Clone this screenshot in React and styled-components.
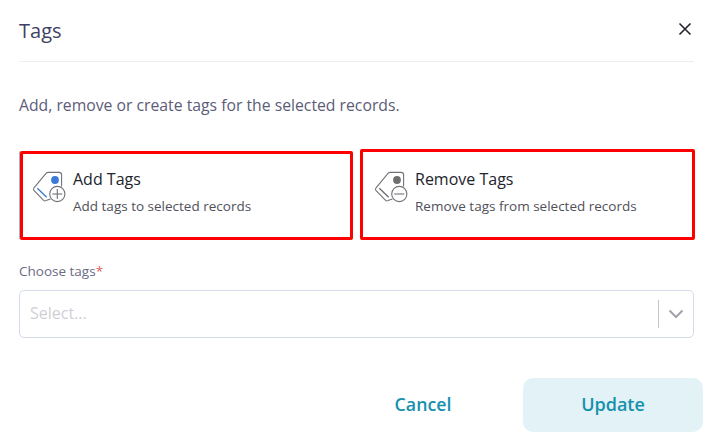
import React from "react";
import styled, { createGlobalStyle } from "styled-components";

const GlobalStyle = createGlobalStyle`
  html, body {
    margin: 0;
    padding: 0;
    background: #ffffff;
    font-family: "Open Sans", "Liberation Sans", sans-serif;
  }
`;

const TagIcon = ({ accent, variant }) => (
  <TagSvg width="34" height="34" viewBox="0 0 34 34" fill="none">
    <path
      d="M1.8 18.2 L14 3.4 Q15 2.4 16.4 2.4 H27 Q29.6 2.4 29.6 5 V16.5"
      stroke="#6f7278"
      strokeWidth="1.1"
    />
    <path
      d="M1.8 18.2 Q1 19.4 1.9 20.4 L11.6 30.4 Q12.8 31.4 14 30.6 L18.5 29"
      stroke="#6f7278"
      strokeWidth="1.1"
    />
    <circle cx="23" cy="10" r="3.9" fill={accent} />
    <path d="M5.3 18.3 L14.7 27.3" stroke={accent} strokeWidth="1.4" />
    <circle cx="25.3" cy="24" r="7.6" fill="#fff" stroke="#6f7278" strokeWidth="1.1" />
    {variant === "add" && <path d="M25.3 19 V29" stroke="#6f7278" strokeWidth="1.1" />}
    <path d="M20.3 24 H30.3" stroke="#6f7278" strokeWidth="1.1" />
  </TagSvg>
);

const options = [
  {
    key: "add",
    title: "Add Tags",
    desc: "Add tags to selected records",
    accent: "#3b7bd6",
  },
  {
    key: "remove",
    title: "Remove Tags",
    desc: "Remove tags from selected records",
    accent: "#6e6e6e",
  },
];

const App = () => {
  return (
    <Modal>
      <GlobalStyle />
      <Header>
        <Title>Tags</Title>
        <CloseIcon width="14" height="14" viewBox="0 0 14 14">
          <path d="M1.5 1.5 L12.5 12.5 M12.5 1.5 L1.5 12.5" stroke="#22242c" strokeWidth="1.6" />
        </CloseIcon>
      </Header>
      <Description>Add, remove or create tags for the selected records.</Description>
      <Cards>
        {options.map((o) => (
          <Card key={o.key} $variant={o.key}>
            <TagIcon accent={o.accent} variant={o.key} />
            <CardText>
              <CardTitle>{o.title}</CardTitle>
              <CardDesc>{o.desc}</CardDesc>
            </CardText>
          </Card>
        ))}
      </Cards>
      <Label>
        Choose tags<Required>*</Required>
      </Label>
      <SelectBox>
        <Placeholder>Select...</Placeholder>
        <Separator />
        <Chevron width="16" height="10" viewBox="0 0 16 10" fill="none">
          <path d="M1.5 1.5 L8 8 L14.5 1.5" stroke="#a3a3ad" strokeWidth="2" />
        </Chevron>
      </SelectBox>
      <Footer>
        <CancelButton>Cancel</CancelButton>
        <UpdateButton>Update</UpdateButton>
      </Footer>
    </Modal>
  );
};

const Modal = styled.div`
  width: 713px;
  height: 443px;
  box-sizing: border-box;
  padding: 0 10px 0 19px;
  overflow: hidden;
  background: #fff;
`;

const Header = styled.div`
  width: 675px;
  height: 62px;
  box-sizing: border-box;
  display: flex;
  justify-content: space-between;
  align-items: center;
  padding: 0 1px 1px 0;
  border-bottom: 1px solid #eeeef0;
`;

const Title = styled.div`
  font-size: 20px;
  font-weight: 500;
  color: #3f3f66;
`;

const CloseIcon = styled.svg`
  display: block;
  margin-top: -3px;
  margin-right: 1px;
`;

const Description = styled.div`
  margin-top: 32px;
  height: 22px;
  line-height: 22px;
  font-size: 15.75px;
  color: #5c5c78;
`;

const Cards = styled.div`
  display: flex;
  align-items: flex-end;
  gap: 7px;
  margin-top: 33px;
  margin-left: 1px;
  width: 675px;
`;

const Card = styled.div`
  box-sizing: border-box;
  width: ${(p) => (p.$variant === "add" ? "333px" : "335px")};
  height: ${(p) => (p.$variant === "add" ? "89px" : "91px")};
  display: flex;
  gap: 7px;
  padding: ${(p) => (p.$variant === "add" ? "15px 0 0 9px" : "17px 0 0 11px")};
  border: 3px solid #ff0000;
  border-radius: 2px;
  box-shadow: ${(p) => (p.$variant === "add" ? "-1px 0 0 #9fb4c2" : "none")};
`;

const TagSvg = styled.svg`
  display: block;
  flex: none;
  margin-top: 1px;
`;

const CardText = styled.div`
  display: flex;
  flex-direction: column;
  gap: 7px;
`;

const CardTitle = styled.div`
  font-size: 16px;
  line-height: 20px;
  font-weight: 500;
  color: #22242c;
`;

const CardDesc = styled.div`
  font-size: 13.5px;
  line-height: 20px;
  color: #50505a;
`;

const Label = styled.div`
  margin-top: 21px;
  height: 20px;
  line-height: 20px;
  font-size: 13.5px;
  color: #6b6b85;
`;

const Required = styled.span`
  color: #e0605a;
`;

const SelectBox = styled.div`
  box-sizing: border-box;
  width: 675px;
  height: 48px;
  margin-top: 9px;
  display: flex;
  align-items: center;
  border: 1px solid #d5dbe8;
  border-radius: 5px;
  padding: 0 9px 0 10px;
`;

const Placeholder = styled.div`
  flex: 1;
  margin-top: -2px;
  font-size: 16px;
  color: #cfcfd6;
`;

const Separator = styled.div`
  width: 1px;
  height: 28px;
  background: #c4c4cc;
`;

const Chevron = styled.svg`
  display: block;
  margin-left: 9px;
`;

const Footer = styled.div`
  margin-top: 40px;
  display: flex;
  justify-content: flex-end;
  align-items: center;
  gap: 50px;
`;

const CancelButton = styled.div`
  width: 100px;
  margin-top: -2px;
  text-align: center;
  font-size: 17.75px;
  font-weight: 600;
  color: #1591ad;
`;

const UpdateButton = styled.div`
  width: 180px;
  height: 54px;
  line-height: 52px;
  text-align: center;
  border-radius: 10px;
  background: #e3f2f6;
  font-size: 18px;
  font-weight: 600;
  color: #1591ad;
`;

export default App;
